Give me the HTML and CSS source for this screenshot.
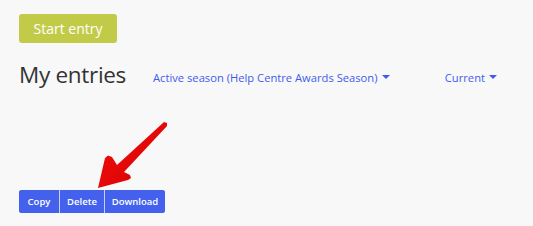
FILE: index.html
```html
<!DOCTYPE html>
<html>
<head>
<meta charset="utf-8">
<link rel="stylesheet" href="styles.css">
</head>
<body>
<div class="page">
  <div class="top">
    <button class="start-btn">Start entry</button>
  </div>
  <div class="header">
    <h1 class="title">My entries</h1>
    <a class="filter season">Active season (Help Centre Awards Season) <span class="caret"></span></a>
    <a class="filter current">Current <span class="caret"></span></a>
  </div>
  <div class="actions">
    <div class="btn-group">
      <button class="act copy">Copy</button>
      <button class="act delete">Delete</button>
      <button class="act download">Download</button>
    </div>
  </div>
  <svg class="arrow" width="533" height="226" viewBox="0 0 533 226">
    <defs>
      <linearGradient id="ag" x1="0" y1="0" x2="1" y2="1">
        <stop offset="0" stop-color="#f01010"/>
        <stop offset="1" stop-color="#d80000"/>
      </linearGradient>
    </defs>
    <polygon fill="url(#ag)" points="98,188 105,158 108,155.5 112,157 117,165 164,122 167,123 167,126 124,172 130,175 131,178 128,180"/>
  </svg>
</div>
</body>
</html>
```
FILE: styles.css
```css
html, body {
  margin: 0;
  padding: 0;
  background: #f8f8f9;
}
body {
  font-family: "Open Sans", "Liberation Sans", sans-serif;
  width: 533px;
  height: 226px;
  overflow: hidden;
}
.page {
  position: relative;
  padding: 14px 19px 0 19px;
  height: 226px;
  box-sizing: border-box;
}
.top {
  display: flex;
}
.start-btn {
  width: 98px;
  height: 29px;
  border: none;
  border-radius: 3px;
  background: #c2cb48;
  color: #fff;
  font-family: inherit;
  font-size: 14px;
  padding: 0;
  margin: 0;
}
.header {
  display: flex;
  align-items: center;
  margin-top: 14px;
  height: 34px;
}
.title {
  margin: 0;
  font-size: 22.5px;
  font-weight: 400;
  color: #333;
  letter-spacing: -0.3px;
  width: 134px;
}
.filter {
  color: #3f5bee;
  font-size: 11.2px;
  display: flex;
  align-items: center;
  margin-top: 6px;
  white-space: nowrap;
}
.caret {
  display: inline-block;
  width: 0;
  height: 0;
  border-left: 4px solid transparent;
  border-right: 4px solid transparent;
  border-top: 4px solid #3f5bee;
  margin-left: 4px;
}
.current {
  margin-left: auto;
  margin-right: 17px;
}
.actions {
  display: flex;
  margin-top: 99px;
}
.btn-group {
  display: flex;
  border-radius: 3px;
  overflow: hidden;
  background: #4461ee;
  height: 23px;
}
.act {
  border: none;
  background: #4461ee;
  color: #fff;
  font-family: inherit;
  font-size: 9.5px;
  font-weight: 600;
  padding: 0;
  margin: 0;
  height: 23px;
}
.copy { width: 40px; }
.delete { width: 45px; border-left: 1px solid #c8d0f0; }
.download { width: 61px; border-left: 1px solid #c8d0f0; }
.arrow {
  position: absolute;
  left: 0;
  top: 0;
  pointer-events: none;
}
```
